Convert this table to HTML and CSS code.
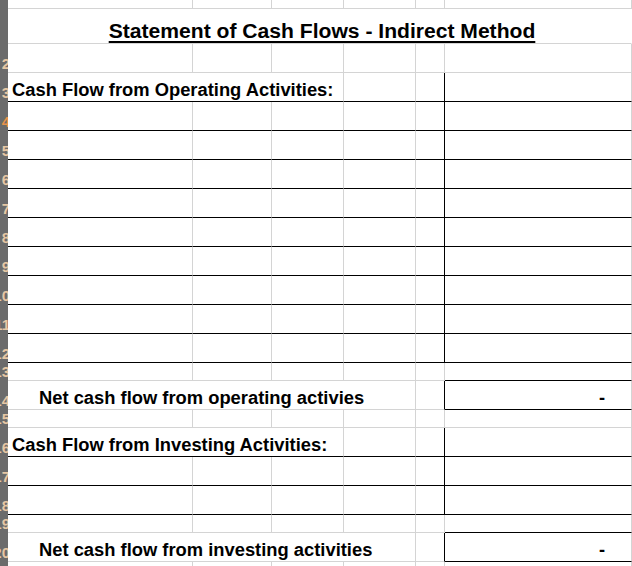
FILE: index.html
```html
<!DOCTYPE html>
<html>
<head>
<meta charset="utf-8">
<link rel="stylesheet" href="styles.css">
</head>
<body>
<div class="sheet">
  <!-- row 0 (partial) -->
  <div class="h"></div>
  <div class="c"></div><div class="c"></div><div class="c"></div><div class="c"></div><div class="c"></div><div class="c"></div>

  <!-- row 1 title -->
  <div class="h"></div>
  <div class="c span6 title-cell"><span class="title">Statement of Cash Flows - Indirect Method</span></div>

  <!-- row 2 -->
  <div class="h"><span>2</span></div>
  <div class="c"></div><div class="c"></div><div class="c"></div><div class="c"></div><div class="c"></div><div class="c"></div>

  <!-- row 3 heading -->
  <div class="h"><span>3</span></div>
  <div class="c span3 bb txt">Cash Flow from Operating Activities:</div><div class="c bb"></div><div class="c bb br"></div><div class="c bb"></div>

  <!-- rows 4-12 -->
  <div class="h"><span class="sel">4</span></div>
  <div class="c bb"></div><div class="c bb"></div><div class="c bb"></div><div class="c bb"></div><div class="c bb br"></div><div class="c bb"></div>
  <div class="h"><span>5</span></div>
  <div class="c bb"></div><div class="c bb"></div><div class="c bb"></div><div class="c bb"></div><div class="c bb br"></div><div class="c bb"></div>
  <div class="h"><span>6</span></div>
  <div class="c bb"></div><div class="c bb"></div><div class="c bb"></div><div class="c bb"></div><div class="c bb br"></div><div class="c bb"></div>
  <div class="h"><span>7</span></div>
  <div class="c bb"></div><div class="c bb"></div><div class="c bb"></div><div class="c bb"></div><div class="c bb br"></div><div class="c bb"></div>
  <div class="h"><span>8</span></div>
  <div class="c bb"></div><div class="c bb"></div><div class="c bb"></div><div class="c bb"></div><div class="c bb br"></div><div class="c bb"></div>
  <div class="h"><span>9</span></div>
  <div class="c bb"></div><div class="c bb"></div><div class="c bb"></div><div class="c bb"></div><div class="c bb br"></div><div class="c bb"></div>
  <div class="h"><span>10</span></div>
  <div class="c bb"></div><div class="c bb"></div><div class="c bb"></div><div class="c bb"></div><div class="c bb br"></div><div class="c bb"></div>
  <div class="h"><span>11</span></div>
  <div class="c bb"></div><div class="c bb"></div><div class="c bb"></div><div class="c bb"></div><div class="c bb br"></div><div class="c bb"></div>
  <div class="h"><span>12</span></div>
  <div class="c bb"></div><div class="c bb"></div><div class="c bb"></div><div class="c bb"></div><div class="c bb br"></div><div class="c bb"></div>

  <!-- row 13 -->
  <div class="h"><span>13</span></div>
  <div class="c"></div><div class="c"></div><div class="c"></div><div class="c"></div><div class="c"></div><div class="c bb"></div>

  <!-- row 14 net operating -->
  <div class="h"><span>14</span></div>
  <div class="c span4 txt indent">Net cash flow from operating activies</div><div class="c br"></div><div class="c bb num">-</div>

  <!-- row 15 -->
  <div class="h"><span>15</span></div>
  <div class="c"></div><div class="c"></div><div class="c"></div><div class="c"></div><div class="c"></div><div class="c"></div>

  <!-- row 16 heading -->
  <div class="h"><span>16</span></div>
  <div class="c span3 bb txt">Cash Flow from Investing Activities:</div><div class="c bb"></div><div class="c bb br"></div><div class="c bb"></div>

  <!-- rows 17-18 -->
  <div class="h"><span>17</span></div>
  <div class="c bb"></div><div class="c bb"></div><div class="c bb"></div><div class="c bb"></div><div class="c bb br"></div><div class="c bb"></div>
  <div class="h"><span>18</span></div>
  <div class="c bb"></div><div class="c bb"></div><div class="c bb"></div><div class="c bb"></div><div class="c bb br"></div><div class="c bb"></div>

  <!-- row 19 -->
  <div class="h"><span>19</span></div>
  <div class="c"></div><div class="c"></div><div class="c"></div><div class="c"></div><div class="c"></div><div class="c bb"></div>

  <!-- row 20 net investing -->
  <div class="h"><span>20</span></div>
  <div class="c span4 txt indent">Net cash flow from investing activities</div><div class="c br"></div><div class="c bb num">-</div>

  <!-- row 21 partial -->
  <div class="h"><span>21</span></div>
  <div class="c"></div><div class="c"></div><div class="c"></div><div class="c"></div><div class="c"></div><div class="c"></div>
</div>
</body>
</html>
```

FILE: styles.css
```css
html, body {
  margin: 0;
  padding: 0;
  background: #ffffff;
  overflow: hidden;
}

.sheet {
  display: grid;
  grid-template-columns: 8px 185px 79px 72px 72px 29px 187px;
  grid-template-rows:
    9px 35px 29px 29px
    29px 29px 29px 29px 29px 29px 29px 29px 29px
    18px 29px 18px 29px 29px 29px 18px 29px 29px;
  width: 632px;
  font-family: "Liberation Sans", Arial, sans-serif;
  font-weight: bold;
  color: #000000;
}

.h {
  background: #6b6b6b;
  overflow: hidden;
  display: flex;
  justify-content: flex-end;
  align-items: flex-end;
}

.h span {
  font-family: "Liberation Sans", Arial, sans-serif;
  font-weight: bold;
  font-size: 15px;
  line-height: 15px;
  color: #e6c7a4;
  white-space: nowrap;
  margin-right: -2px;
  padding-bottom: 2px;
}

.h span.sel {
  color: #e8934a;
}

.c {
  box-sizing: border-box;
  border-right: 1px solid #d4d4d4;
  border-bottom: 1px solid #d4d4d4;
  min-width: 0;
}

.bb {
  border-bottom-color: #000000;
}

.br {
  border-right-color: #000000;
}

.span3 { grid-column: span 3; }
.span4 { grid-column: span 4; }
.span6 { grid-column: span 6; border-right-color: transparent; }

.txt {
  display: flex;
  align-items: flex-end;
  padding-left: 4px;
  padding-bottom: 2px;
  font-size: 18.35px;
  line-height: 18px;
  white-space: nowrap;
}

.indent {
  padding-left: 31px;
}

.num {
  display: flex;
  justify-content: flex-end;
  align-items: flex-end;
  padding-right: 26px;
  padding-bottom: 2px;
  font-size: 18.35px;
  line-height: 18px;
}

.title-cell {
  display: flex;
  justify-content: center;
  align-items: flex-end;
  padding-left: 5px;
  padding-bottom: 2px;
}

.title {
  font-size: 21.1px;
  line-height: 21px;
  text-decoration: underline;
  text-decoration-thickness: 2px;
  text-underline-offset: 3px;
  white-space: nowrap;
}
```
